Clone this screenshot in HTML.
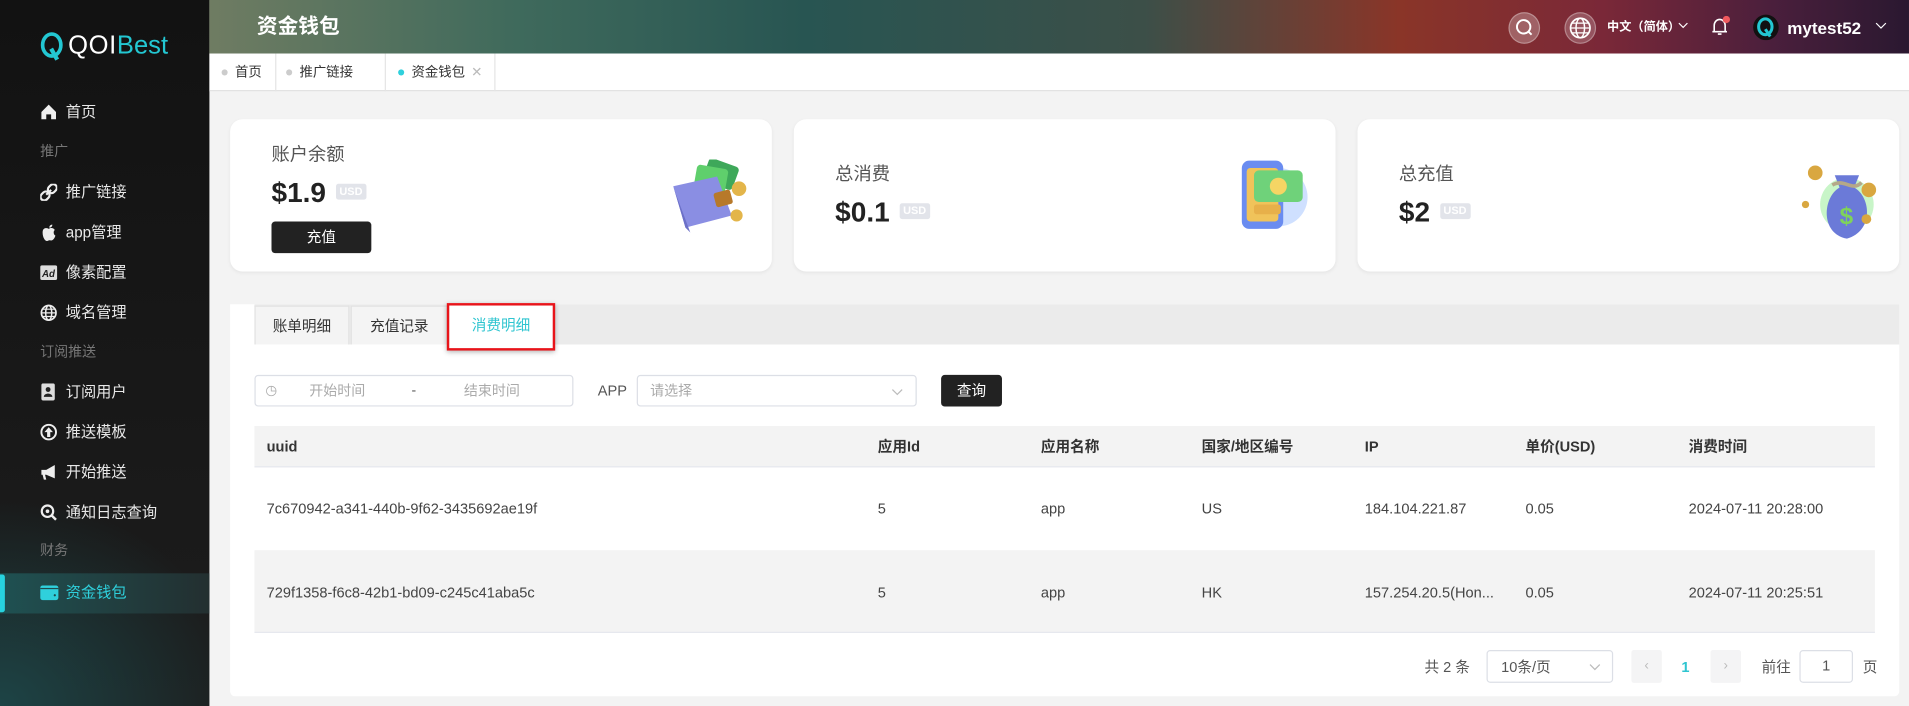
<!DOCTYPE html>
<html><head><meta charset="utf-8"><style>
*{margin:0;padding:0;box-sizing:border-box}
html,body{width:1909px;height:706px;overflow:hidden;background:#f3f3f3}
body{font-family:"Liberation Sans","Noto Sans CJK SC",sans-serif}
#w{position:absolute;left:0;top:0;width:1568px;height:580px;transform:scale(1.21747,1.21724);transform-origin:0 0;background:#f3f3f3;font-size:12px;color:#333;line-height:14px}
#w span,#w div{line-height:14px}
.a{position:absolute}
#side{left:0;top:0;width:172px;height:580px;background:radial-gradient(ellipse 200px 170px at 0 580px,#1d4446 0%,rgba(30,60,60,0) 100%),linear-gradient(#121212,#1d1d1d)}
.mi{position:absolute;left:33px;color:#e8e8e8;font-size:12.5px;display:flex;align-items:center;height:20px}
.mi i{display:inline-block;width:14px;height:14px;margin-right:7px;position:relative}
.grp{position:absolute;left:33px;color:#777;font-size:11.5px}
#hdr{left:172px;top:0;width:1396px;height:44px;background:linear-gradient(90deg,#6f7c62 0%,#3f6a5c 18%,#285552 35%,#3c4f48 55%,#8a3528 70%,#7a2838 82%,#4a1f3c 92%,#2a1830 100%)}
#tabs{left:172px;top:44px;width:1396px;height:31px;background:#fff;border-bottom:1px solid #e0e0e0}
.tb{position:absolute;top:0;height:31px;border-right:1px solid #e4e4e4;font-size:11px;color:#333;display:flex;align-items:center;padding-left:10px}
.tb b{width:5px;height:5px;border-radius:50%;background:#ccc;margin-right:6px;display:inline-block}
.card{position:absolute;top:98px;width:445px;height:125px;background:#fff;border-radius:10px;box-shadow:0 1px 3px rgba(0,0,0,.06)}
#w .card .t{position:absolute;left:34px;font-size:15px;color:#555;line-height:18px}
#w .card .v{position:absolute;left:34px;font-size:23px;font-weight:bold;color:#222;line-height:28px}
#w .usd{display:inline-block;background:#e2e4ea;color:#fff;font-size:9px;font-weight:bold;padding:1px 3px;border-radius:2px;vertical-align:middle;margin-left:8px;position:relative;top:-2px;line-height:11px}
.th{position:absolute;top:360px;font-weight:bold;font-size:12px;color:#333}
.td{position:absolute;font-size:12px;color:#444}
</style></head><body><div id="w">
<div id="side" class="a">
 <div class="a" style="left:33px;top:26px;display:flex;align-items:center">
  <svg width="19" height="24" viewBox="0 0 19 24"><ellipse cx="9.5" cy="11" rx="7.5" ry="9" fill="none" stroke="#23c7d2" stroke-width="3"/><path d="M9 14 L14 23" stroke="#23c7d2" stroke-width="3.5"/></svg>
  <span style="color:#fff;font-size:21px;line-height:24px;margin-left:4px;letter-spacing:0.5px">QOI</span><span style="color:#23c7d2;font-size:21px;line-height:24px">Best</span>
 </div>
 <div class="mi" style="top:82px"><i><svg width="14" height="14"><path d="M1 7 L7 1 L13 7 V13 H9 V9 H5 V13 H1Z" fill="#eee"/></svg></i>首页</div>
 <div class="grp" style="top:118px">推广</div>
 <div class="mi" style="top:148px"><i><svg width="14" height="14"><path d="M5 9 L9 5" stroke="#eee" stroke-width="1.8"/><rect x="1" y="6" width="6" height="8" rx="3" transform="rotate(45 4 10)" fill="none" stroke="#eee" stroke-width="1.8"/><rect x="7" y="0" width="6" height="8" rx="3" transform="rotate(45 10 4)" fill="none" stroke="#eee" stroke-width="1.8"/></svg></i>推广链接</div>
 <div class="mi" style="top:181px"><i><svg width="14" height="14"><path d="M7 4 C5 3 2 3 2 7 C2 11 4 14 5.5 14 C6.5 14 7 13 8.5 13.5 C10 14 12 12 12.5 9.5 C11 9 10.5 6 12 5 C11 3 8.5 3 7 4Z M7.5 3 C7.5 1.5 8.5 0.5 10 0.5 C10 2 9 3 7.5 3Z" fill="#eee"/></svg></i>app管理</div>
 <div class="mi" style="top:214px"><i><svg width="14" height="14"><rect x="0" y="1" width="14" height="12" rx="1.5" fill="#ddd"/><text x="1.5" y="10.5" font-size="8" font-weight="bold" fill="#222" font-family="Liberation Sans">Ad</text></svg></i>像素配置</div>
 <div class="mi" style="top:247px"><i><svg width="14" height="14"><circle cx="7" cy="7" r="6" fill="none" stroke="#eee" stroke-width="1.4"/><ellipse cx="7" cy="7" rx="2.5" ry="6" fill="none" stroke="#eee" stroke-width="1.2"/><path d="M1 7H13M2 4H12M2 10H12" stroke="#eee" stroke-width="1"/></svg></i>域名管理</div>
 <div class="grp" style="top:283px">订阅推送</div>
 <div class="mi" style="top:312px"><i><svg width="14" height="14"><rect x="1" y="0" width="11" height="14" rx="1.5" fill="#ddd"/><circle cx="6.5" cy="5" r="2" fill="#222"/><path d="M3 11 C3 7.5 10 7.5 10 11Z" fill="#222"/></svg></i>订阅用户</div>
 <div class="mi" style="top:345px"><i><svg width="14" height="14"><circle cx="7" cy="7" r="6" fill="none" stroke="#eee" stroke-width="1.6"/><path d="M7 3 L10.5 7 H8.3 V11 H5.7 V7 H3.5Z" fill="#eee"/></svg></i>推送模板</div>
 <div class="mi" style="top:378px"><i><svg width="14" height="14"><path d="M1 5 H5 L12 1 V12 L5 9 H4 L5 13 H3 L2 9 H1Z" fill="#eee"/></svg></i>开始推送</div>
 <div class="mi" style="top:411px"><i><svg width="14" height="14"><circle cx="6" cy="6" r="4.7" fill="none" stroke="#eee" stroke-width="1.8"/><circle cx="6" cy="6" r="1.5" fill="#eee"/><path d="M9.5 9.5 L13 13" stroke="#eee" stroke-width="2"/></svg></i>通知日志查询</div>
 <div class="grp" style="top:446px">财务</div>
 <div class="a" style="left:0;top:471px;width:172px;height:33px;background:linear-gradient(90deg,#1f5152,#232f30)"></div>
 <div class="a" style="left:0;top:472px;width:4px;height:31px;background:#27d3df;border-radius:0 2px 2px 0"></div>
 <div class="mi" style="top:477px;color:#2fd0dc"><i><svg width="15" height="14"><rect x="0" y="1" width="15" height="12" rx="2" fill="#2fd0dc"/><rect x="0" y="3" width="15" height="1" fill="#1f4a4c"/><circle cx="12" cy="9" r="0.9" fill="#1f4a4c"/></svg></i>资金钱包</div>
</div>
<div id="hdr" class="a">
 <div class="a" style="left:39px;top:12px;color:#fff;font-size:17px;font-weight:bold;line-height:20px">资金钱包</div>
 <div class="a" style="left:1067px;top:10px;width:26px;height:26px;border-radius:50%;background:rgba(255,255,255,.25);border:1px solid rgba(255,255,255,.3)"><svg width="26" height="26" style="position:absolute;left:-1px;top:-1px"><circle cx="12.5" cy="12" r="5.5" fill="none" stroke="#fff" stroke-width="1.6"/><path d="M16.5 16 L19 18.5" stroke="#fff" stroke-width="1.6"/></svg></div>
 <div class="a" style="left:1113px;top:10px;width:26px;height:26px;border-radius:50%;background:rgba(255,255,255,.2);border:1px solid rgba(255,255,255,.3)"><svg width="26" height="26" style="position:absolute;left:-1px;top:-1px"><circle cx="13" cy="13" r="8" fill="none" stroke="#fff" stroke-width="1.4"/><ellipse cx="13" cy="13" rx="3.5" ry="8" fill="none" stroke="#fff" stroke-width="1.2"/><path d="M5 13H21M6 9H20M6 17H20" stroke="#fff" stroke-width="1"/></svg></div>
 <div class="a" style="left:1148px;top:16px;color:#fff;font-size:10px;font-weight:bold">中文（简体）</div>
 <svg class="a" style="left:1206px;top:18px" width="9" height="6"><path d="M1 1 L4.5 4.5 L8 1" fill="none" stroke="#fff" stroke-width="1"/></svg>
 <svg class="a" style="left:1233px;top:13px" width="16" height="18"><path d="M3 13 V8 C3 5 5 3 7.5 3 C10 3 12 5 12 8 V13 H13.5 M1.5 13 H13.5" fill="none" stroke="#fff" stroke-width="1.3"/><path d="M6 15 H9" stroke="#fff" stroke-width="1.3"/><circle cx="13" cy="3" r="3" fill="#f0595e"/></svg>
 <div class="a" style="left:1268px;top:12px;width:21px;height:21px;border-radius:50%;background:#111"><svg width="21" height="21"><ellipse cx="10" cy="10" rx="5.5" ry="6.5" fill="none" stroke="#23c7d2" stroke-width="2.5"/><path d="M10 12 L14 18" stroke="#23c7d2" stroke-width="2.5"/></svg></div>
 <div class="a" style="left:1296px;top:15px;color:#fff;font-size:14px;font-weight:bold;line-height:16px">mytest52</div>
 <svg class="a" style="left:1368px;top:18px" width="10" height="6"><path d="M1 1 L5 5 L9 1" fill="none" stroke="#fff" stroke-width="1"/></svg>
</div>
<div id="tabs" class="a">
 <div class="tb" style="left:0;width:55px"><b></b>首页</div>
 <div class="tb" style="left:55px;width:90px;padding-left:8px"><b></b>推广链接</div>
 <div class="tb" style="left:145px;width:90px"><b style="background:#2fd0dc"></b>资金钱包<span style="color:#bbb;margin-left:5px">✕</span></div>
</div>
<div class="card" style="left:189px"><div class="t" style="top:21px">账户余额</div><div class="v" style="top:46px">$1.9<span class="usd">USD</span></div><div class="a" style="left:34px;top:84px;width:82px;height:26px;background:#222;color:#fff;border-radius:3px;text-align:center;line-height:26px;font-size:12px">充值</div>
 <svg class="a" style="left:360px;top:33px" width="70" height="65"><rect x="30" y="2" width="26" height="20" rx="3" fill="#3ea85a" transform="rotate(20 43 12)"/><rect x="22" y="6" width="26" height="20" rx="3" fill="#5fcf6c" transform="rotate(10 35 16)"/><path d="M4 22 L40 14 L52 46 L14 56 Z" fill="#8a8ee3"/><path d="M4 22 L14 56 L18 60 L6 28Z" fill="#6c70c8"/><rect x="38" y="26" width="14" height="12" rx="2" fill="#b7792a" transform="rotate(-15 45 32)"/><circle cx="58" cy="24" r="6" fill="#e3b54a"/><circle cx="56" cy="46" r="5" fill="#e3b54a"/></svg>
</div>
<div class="card" style="left:652px"><div class="t" style="top:37px">总消费</div><div class="v" style="top:62px">$0.1<span class="usd">USD</span></div>
 <svg class="a" style="left:362px;top:30px" width="62" height="65"><circle cx="36" cy="34" r="24" fill="#cfe0ff"/><rect x="6" y="4" width="34" height="56" rx="6" fill="#6a8cf0"/><rect x="10" y="10" width="26" height="44" rx="3" fill="#f0c35a"/><rect x="16" y="12" width="40" height="26" rx="4" fill="#6fd27a"/><circle cx="36" cy="25" r="7" fill="#f5d564"/><rect x="16" y="40" width="22" height="8" rx="2" fill="#e7b04a"/></svg>
</div>
<div class="card" style="left:1115px"><div class="t" style="top:37px">总充值</div><div class="v" style="top:62px">$2<span class="usd">USD</span></div>
 <svg class="a" style="left:360px;top:34px" width="80" height="70"><circle cx="42" cy="36" r="22" fill="#c8f5c8"/><path d="M32 12 L52 12 L48 22 C62 30 64 58 42 64 C20 60 22 30 36 22Z" fill="#6b7ad8"/><text x="36" y="52" font-size="20" font-weight="bold" fill="#7fd35a" font-family="Liberation Sans">$</text><circle cx="16" cy="10" r="6" fill="#d9a740"/><circle cx="60" cy="24" r="6" fill="#d9a740"/><circle cx="8" cy="36" r="3" fill="#d9a740"/><circle cx="58" cy="48" r="4" fill="#d9a740"/><path d="M30 20 C40 14 46 26 54 18" stroke="#b5a888" stroke-width="3" fill="none"/></svg>
</div>
<div class="a" style="left:189px;top:250px;width:1371px;height:322px;background:#fff;border-radius:0 0 4px 4px"></div>
<div class="a" style="left:209px;top:250px;width:1351px;height:33px;background:#ebebeb"></div>
<div class="a" style="left:209px;top:251px;width:78px;height:32px;background:#f4f4f4;border:1px solid #e2e2e2;border-bottom:none;text-align:center;line-height:32px;font-size:12px;color:#333">账单明细</div>
<div class="a" style="left:288px;top:251px;width:80px;height:32px;background:#f4f4f4;border:1px solid #e2e2e2;border-bottom:none;text-align:center;line-height:32px;font-size:12px;color:#333">充值记录</div>
<div class="a" style="left:369px;top:251px;width:85px;height:33px;background:#fff;text-align:center;line-height:32px;font-size:12px;color:#2fc5d0">消费明细</div>
<div class="a" style="left:367px;top:249px;width:89px;height:39px;border:2px solid #e8141a;box-shadow:0 1px 4px rgba(0,0,0,.3)"></div>
<div class="a" style="left:209px;top:308px;width:262px;height:26px;border:1px solid #dcdfe6;border-radius:3px;font-size:11.5px;color:#aaa"><span class="a" style="left:8px;top:5px;font-size:11px">◷</span><span class="a" style="left:44px;top:6px">开始时间</span><span class="a" style="left:128px;top:5px;color:#555">-</span><span class="a" style="left:171px;top:6px">结束时间</span></div>
<div class="a" style="left:491px;top:314px;color:#555;font-size:12px">APP</div>
<div class="a" style="left:523px;top:308px;width:230px;height:26px;border:1px solid #dcdfe6;border-radius:3px;font-size:11.5px;color:#aaa"><span class="a" style="left:10px;top:6px">请选择</span><svg class="a" style="left:208px;top:10px" width="10" height="6"><path d="M1 1 L5 5 L9 1" fill="none" stroke="#bbb" stroke-width="1"/></svg></div>
<div class="a" style="left:773px;top:308px;width:50px;height:26px;background:#222;color:#fff;border-radius:3px;text-align:center;line-height:26px;font-size:12px">查询</div>
<div class="a" style="left:209px;top:350px;width:1331px;height:34px;background:#f3f3f3;border-bottom:1px solid #e6e8ee"></div>
<div class="a" style="left:209px;top:452px;width:1331px;height:68px;background:#f3f3f3;border-bottom:1px solid #e6e8ee"></div>
<div class="th" style="left:219px">uuid</div><div class="th" style="left:721px">应用Id</div><div class="th" style="left:855px">应用名称</div><div class="th" style="left:987px">国家/地区编号</div><div class="th" style="left:1121px">IP</div><div class="th" style="left:1253px">单价(USD)</div><div class="th" style="left:1387px">消费时间</div>
<div class="td" style="left:219px;top:411px">7c670942-a341-440b-9f62-3435692ae19f</div><div class="td" style="left:721px;top:411px">5</div><div class="td" style="left:855px;top:411px">app</div><div class="td" style="left:987px;top:411px">US</div><div class="td" style="left:1121px;top:411px">184.104.221.87</div><div class="td" style="left:1253px;top:411px">0.05</div><div class="td" style="left:1387px;top:411px">2024-07-11 20:28:00</div>
<div class="td" style="left:219px;top:480px">729f1358-f6c8-42b1-bd09-c245c41aba5c</div><div class="td" style="left:721px;top:480px">5</div><div class="td" style="left:855px;top:480px">app</div><div class="td" style="left:987px;top:480px">HK</div><div class="td" style="left:1121px;top:480px">157.254.20.5(Hon...</div><div class="td" style="left:1253px;top:480px">0.05</div><div class="td" style="left:1387px;top:480px">2024-07-11 20:25:51</div>
<div class="a" style="left:1170px;top:541px;font-size:12px;color:#555">共 2 条</div>
<div class="a" style="left:1221px;top:534px;width:104px;height:27px;border:1px solid #dcdfe6;border-radius:3px;font-size:12px;color:#555"><span class="a" style="left:11px;top:6px">10条/页</span><svg class="a" style="left:83px;top:10px" width="10" height="6"><path d="M1 1 L5 5 L9 1" fill="none" stroke="#bbb" stroke-width="1"/></svg></div>
<div class="a" style="left:1340px;top:534px;width:25px;height:27px;background:#f4f4f5;border-radius:2px;color:#bbb;text-align:center;line-height:27px;font-size:11px">‹</div>
<div class="a" style="left:1381px;top:541px;color:#2fc5d0;font-weight:bold;font-size:12px">1</div>
<div class="a" style="left:1405px;top:534px;width:25px;height:27px;background:#f4f4f5;border-radius:2px;color:#bbb;text-align:center;line-height:27px;font-size:11px">›</div>
<div class="a" style="left:1447px;top:541px;font-size:12px;color:#555">前往</div>
<div class="a" style="left:1478px;top:534px;width:44px;height:27px;border:1px solid #dcdfe6;border-radius:3px;text-align:center;line-height:25px;font-size:12px;color:#555">1</div>
<div class="a" style="left:1530px;top:541px;font-size:12px;color:#555">页</div>
</div></body></html>
